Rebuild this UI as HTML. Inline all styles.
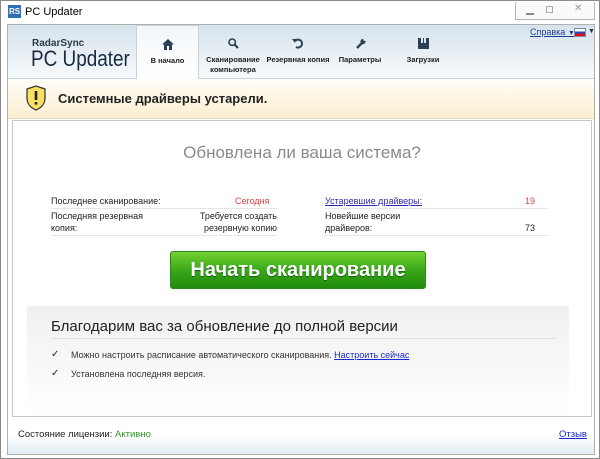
<!DOCTYPE html>
<html><head><meta charset="utf-8"><style>
*{margin:0;padding:0;box-sizing:border-box}
body{width:600px;height:459px;background:#f0f0f0;font-family:"Liberation Sans",Arial,sans-serif;position:relative;overflow:hidden}
.win{position:absolute;left:0;top:0;width:600px;height:459px;border:1px solid #8a8a8a;background:#fff}
.title{position:absolute;left:0;top:0;width:598px;height:22px;background:#fff;font-size:11px}
.title .ic{position:absolute;left:7px;top:4px;width:13px;height:13px;background:#2f6fb5;color:#fff;font-size:8px;font-weight:bold;line-height:13px;text-align:center}
.title .t{position:absolute;left:24px;top:5px;color:#000}
.ctl{position:absolute;left:514px;top:1px;width:80px;height:18px;border:1px solid #b5b5b5;border-top:none;background:#fafafa}
.frame{position:absolute;left:6px;top:23px;width:588px;height:431px;border:1px solid #b0b0b0;background:#fff}
.hdr{position:absolute;left:0;top:0;width:586px;height:54px;background:linear-gradient(#d7e3ec,#f6f9fb);border-bottom:1px solid #c7d3dc}
.logo1{position:absolute;left:24px;top:13px;font-size:10px;font-weight:bold;color:#2a3a4a}
.logo2{position:absolute;left:23px;top:21px;font-size:22px;color:#1a2a3f;transform:scaleX(0.86);transform-origin:0 0;white-space:nowrap}
.tab{position:absolute;top:0;height:54px;text-align:center;font-size:7.5px;font-weight:bold;color:#222;line-height:10px}
.tab.act{border:1px solid #c7d3dc;border-bottom:none;height:55px;background:linear-gradient(#f3f7fa,#fff)}
.tab svg{display:block;margin:13px auto 6px}
.help{position:absolute;left:522px;top:2px;font-size:9px;color:#1f3f8f;text-decoration:underline}
.flag{position:absolute;left:566px;top:3px;width:12px;height:9px;border:1px solid #7a8da0;background:linear-gradient(#fff 33%,#1f4fc0 33%,#1f4fc0 66%,#e01010 66%)}
.warn{position:absolute;left:0;top:54px;width:586px;height:40px;background:linear-gradient(#fffdf8,#fcefd0);border-bottom:1px solid #e8dcc0}
.warn .tx{position:absolute;left:50px;top:12px;font-size:13px;font-weight:bold;color:#222}
.box{position:absolute;left:4px;top:95px;width:580px;height:297px;border:1px solid #c8c8c8;background:#fff}
.q{position:absolute;left:0;width:578px;top:22px;text-align:center;font-size:17px;color:#8a8a8a}
.r{position:absolute;font-size:9px;color:#222;line-height:12px}
.line{position:absolute;height:1px;background:#e6e6e6}
.btn{position:absolute;left:157px;top:130px;width:256px;height:38px;border-radius:3px;border:1px solid #2c8a1c;background:linear-gradient(#72d12e,#3aa91a 50%,#1f8a0c);color:#fff;font-size:20px;font-weight:bold;text-align:center;line-height:36px;text-shadow:0 1px 1px #1a5a10}
.thx{position:absolute;left:14px;top:185px;width:542px;height:110px;background:linear-gradient(#f0f0f0,#fff)}
.thx h{position:absolute;left:24px;top:12px;font-size:15px;color:#222}
.it{position:absolute;left:44px;font-size:9px;color:#333}
.ck{position:absolute;left:24px;font-size:10px;color:#222}
.foot{position:absolute;left:0;top:393px;width:586px;height:36px;background:linear-gradient(#fff 50%,#e3edf3)}
</style></head><body>
<div class="win">
<div class="title"><div class="ic">RS</div><div class="t">PC Updater</div>
<div class="ctl"><span style="position:absolute;left:10px;top:11px;width:8px;height:2px;background:#888"></span><span style="position:absolute;left:30px;top:4px;width:7px;height:7px;border:1px solid #aaa"></span><span style="position:absolute;left:58px;top:1px;font-size:10px;color:#999">✕</span></div></div>
<div class="frame">
<div class="hdr">
<div class="logo1">RadarSync</div><div class="logo2">PC Updater</div>
<div class="tab act" style="left:128px;width:63px"><svg width="12" height="11" viewBox="0 0 12 11"><path d="M6 0L0 5.5h2V11h3V7h2v4h3V5.5h2z" fill="#2b3f55"/></svg>В начало</div>
<div class="tab" style="left:193px;width:64px"><svg width="11" height="11" viewBox="0 0 11 11"><circle cx="4.2" cy="4.2" r="3.2" stroke="#2b3f55" stroke-width="1.6" fill="none"/><path d="M6.5 6.5L10 10" stroke="#2b3f55" stroke-width="2.2"/></svg>Сканирование<br>компьютера</div>
<div class="tab" style="left:256px;width:68px"><svg width="12" height="11" viewBox="0 0 12 11"><path d="M3 3a4 4 0 1 1 1 6" stroke="#2b3f55" stroke-width="2" fill="none"/><path d="M0 1l4 0-1 4z" fill="#2b3f55"/></svg>Резервная копия</div>
<div class="tab" style="left:327px;width:50px"><svg width="11" height="11" viewBox="0 0 11 11"><path d="M2 10L7 5" stroke="#2b3f55" stroke-width="2.4"/><circle cx="8" cy="3.5" r="2.6" fill="#2b3f55"/><circle cx="9.5" cy="1.8" r="1.2" fill="#e8eef3"/></svg>Параметры</div>
<div class="tab" style="left:390px;width:50px"><svg width="11" height="11" viewBox="0 0 11 11"><path d="M0 0h3v5h2V0h1v5h2V0h3v11H0z" fill="#2b3f55"/><path d="M3 5h5l-2.5 3z" fill="#2b3f55"/></svg>Загрузки</div>
<div class="help">Справка <span style="text-decoration:none;font-size:7px">▼</span></div><div class="flag"></div><span style="position:absolute;left:580px;top:3px;font-size:7px;color:#234">▼</span>
</div>
<div class="warn"><svg style="position:absolute;left:18px;top:6px" width="20" height="26" viewBox="0 0 20 26"><path d="M10 1L19 4v9c0 6-4 10-9 12C5 23 1 19 1 13V4z" fill="#f8e160" stroke="#3a3a3a" stroke-width="1.3"/><rect x="8.7" y="6" width="2.6" height="9" fill="#222"/><rect x="8.7" y="17" width="2.6" height="2.6" fill="#222"/></svg><div class="tx">Системные драйверы устарели.</div></div>
<div class="box">
<div class="q">Обновлена ли ваша система?</div>
<div class="r" style="left:38px;top:74px">Последнее сканирование:</div>
<div class="r" style="left:222px;top:74px;color:#e04040">Сегодня</div>
<div class="line" style="left:38px;top:87px;width:226px"></div>
<div class="r" style="left:38px;top:89px">Последняя резервная<br>копия:</div>
<div class="r" style="left:160px;top:89px;width:104px;text-align:right">Требуется создать<br>резервную копию</div>
<div class="line" style="left:38px;top:114px;width:226px"></div>
<div class="r" style="left:312px;top:74px;color:#2a2ab0;text-decoration:underline">Устаревшие драйверы:</div>
<div class="r" style="left:512px;top:74px;color:#e04040">19</div>
<div class="line" style="left:312px;top:87px;width:222px"></div>
<div class="r" style="left:312px;top:89px">Новейшие версии<br>драйверов:</div>
<div class="r" style="left:512px;top:101px">73</div>
<div class="line" style="left:312px;top:114px;width:222px"></div>
<div class="btn">Начать сканирование</div>
<div class="thx"><h>Благодарим вас за обновление до полной версии</h>
<div style="position:absolute;left:24px;top:32px;width:505px;height:1px;background:#ddd"></div>
<div class="ck" style="top:43px">✓</div><div class="it" style="top:44px">Можно настроить расписание автоматического сканирования. <span style="color:#1a2ad0;text-decoration:underline">Настроить сейчас</span></div>
<div class="ck" style="top:62px">✓</div><div class="it" style="top:63px">Установлена последняя версия.</div>
</div>
</div>
<div class="foot"><span style="position:absolute;left:10px;top:11px;font-size:9.5px;color:#222">Состояние лицензии: <span style="color:#2a9a2a">Активно</span></span><span style="position:absolute;left:551px;top:11px;font-size:9.5px;color:#1a2ad0;text-decoration:underline">Отзыв</span></div>
</div>
</div>
</body></html>
